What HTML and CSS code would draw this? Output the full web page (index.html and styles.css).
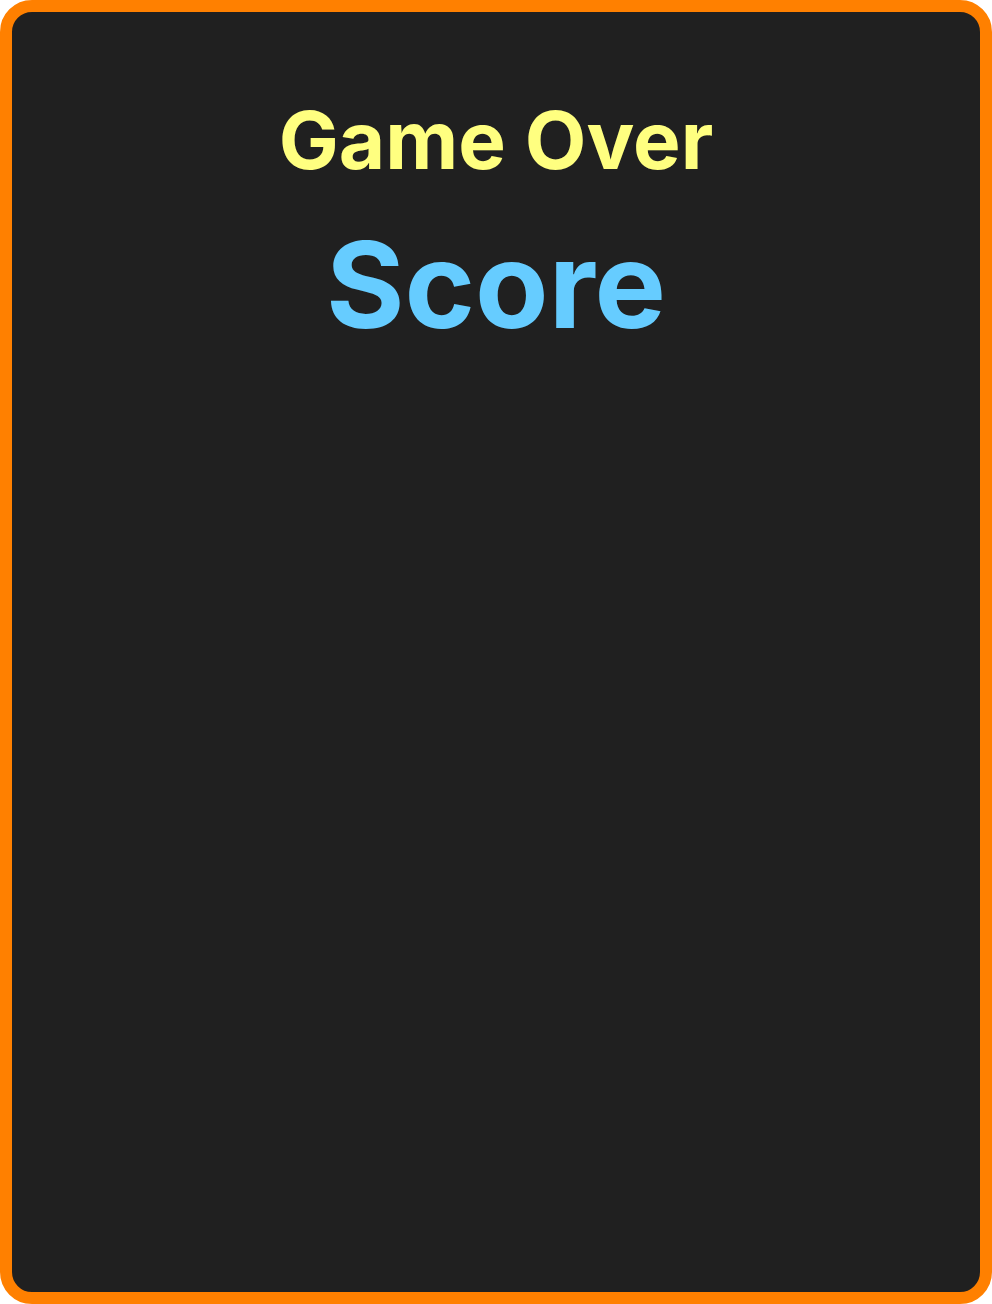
FILE: index.html
```html
<!DOCTYPE html>
<html>
<head>
<meta charset="utf-8">
<link rel="stylesheet" href="styles.css">
</head>
<body>
<div class="card">
  <div class="title">Game Over</div>
  <div class="score">Score</div>
</div>
</body>
</html>
```
FILE: styles.css
```css
html, body {
  margin: 0;
  padding: 0;
  background: #ffffff;
}
.card {
  box-sizing: border-box;
  width: 992px;
  height: 1304px;
  border: 12px solid #ff8000;
  border-radius: 32px;
  background: #202020;
  display: flex;
  flex-direction: column;
  align-items: center;
  padding-top: 88px;
  font-family: Inter, "Liberation Sans", sans-serif;
  font-weight: 700;
}
.title {
  font-size: 80px;
  line-height: 1;
  color: #ffff80;
}
.score {
  font-size: 120px;
  line-height: 1;
  color: #66ccff;
  margin-top: 45px;
}
```
